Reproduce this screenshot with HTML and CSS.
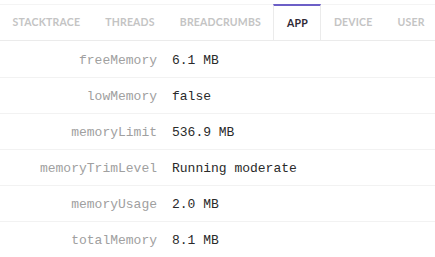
FILE: index.html
```html
<!DOCTYPE html>
<html lang="en">
<head>
  <meta charset="UTF-8">
  <title>App Context</title>
  <link rel="stylesheet" href="styles.css">
</head>
<body>
  <div class="event">
    <ul class="tabs">
      <li class="tabs__item">Stacktrace</li>
      <li class="tabs__item">Threads</li>
      <li class="tabs__item">Breadcrumbs</li>
      <li class="tabs__item tabs__item--active">App</li>
      <li class="tabs__item">Device</li>
      <li class="tabs__item">User</li>
    </ul>
    <table class="context">
      <tr><td class="context__key">freeMemory</td><td class="context__value">6.1 MB</td></tr>
      <tr><td class="context__key">lowMemory</td><td class="context__value">false</td></tr>
      <tr><td class="context__key">memoryLimit</td><td class="context__value">536.9 MB</td></tr>
      <tr><td class="context__key">memoryTrimLevel</td><td class="context__value">Running moderate</td></tr>
      <tr><td class="context__key">memoryUsage</td><td class="context__value">2.0 MB</td></tr>
      <tr><td class="context__key">totalMemory</td><td class="context__value">8.1 MB</td></tr>
    </table>
  </div>
</body>
</html>
```

FILE: styles.css
```css
html {
  box-sizing: border-box;
  background: #fff;
}

*, *:before, *:after {
  box-sizing: inherit;
}

body {
  margin: 0;
  padding-top: 4px;
  font-family: 'Lato', sans-serif;
}

.tabs {
  display: flex;
  margin: 0;
  padding: 0;
  list-style: none;
  height: 37px;
  border-top: 1px solid #f4f4f4;
  border-bottom: 1px solid #ebebeb;
}

.tabs__item {
  padding: 0 11.5px;
  line-height: 35px;
  font-size: 10.5px;
  font-weight: 700;
  letter-spacing: 0.2px;
  text-transform: uppercase;
  white-space: nowrap;
  color: #c4c4c4;
  border: 1px solid transparent;
  border-top: 0;
}

.tabs__item--active {
  margin-top: -1px;
  height: 37px;
  padding: 0 12.5px;
  color: #2f2936;
  background: #fff;
  border-color: #ebebeb;
  border-top: 2px solid #6c5fc7;
}

.context {
  width: 100%;
  border-collapse: collapse;
  font-family: 'Liberation Mono', monospace;
  font-size: 13px;
}

.context td {
  height: 36px;
  padding: 3px 0 0;
  border-bottom: 1px solid #f2f2f2;
  vertical-align: middle;
}

.context__key {
  width: 157px;
  text-align: right;
  color: #a0a0a0;
}

.context__value {
  padding-left: 15px !important;
  color: #2a2a2a;
}
```
